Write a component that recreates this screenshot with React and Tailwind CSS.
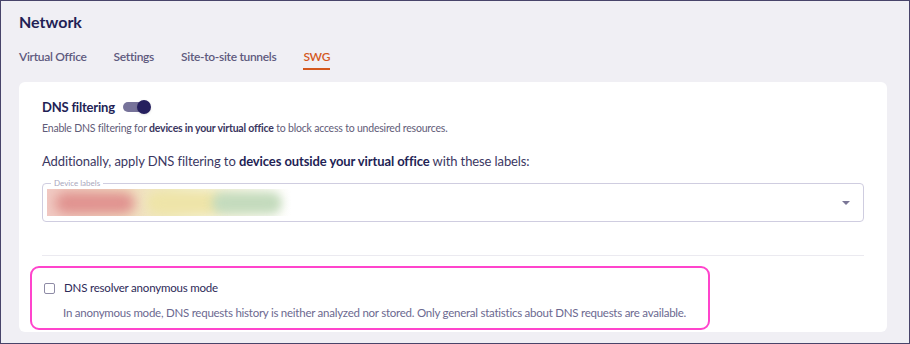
import React from "react";

export default function App() {
  return (
    <div className="w-[910px] h-[344px] border border-[#48446a] bg-[#f0eff4] overflow-hidden" style={{ fontFamily: "Lato, 'Noto Sans', sans-serif" }}>
      <div className="pl-[18px] pr-[22px]">
        <h1 className="pt-[10px] text-[16px] font-bold text-[#231f55] leading-[22px]">Network</h1>
        <div className="flex gap-[27px] mt-[16px] text-[12px] tracking-[-0.3px] font-semibold text-[#5e5a7e] leading-[16px]">
          <div className="pb-[5px]">Virtual Office</div>
          <div className="pb-[5px]">Settings</div>
          <div className="pb-[5px]">Site-to-site tunnels</div>
          <div className="pb-[3px] text-[#d4581e] border-b-[2px] border-[#d4581e]">SWG</div>
        </div>
        <div className="mt-[12px] bg-white rounded-[6px] h-[250px] pt-[15px] px-[23px]">
          <div className="flex items-center gap-[8px]">
            <span className="text-[13px] tracking-[-0.2px] font-bold text-[#231f55] leading-[20px]">DNS filtering</span>
            <div className="relative w-[28px] h-[16px] flex items-center">
              <div className="w-[24px] h-[10px] rounded-full bg-[#77739a]"></div>
              <div className="absolute right-0 top-[1px] w-[14px] h-[14px] rounded-full bg-[#251f5e] shadow"></div>
            </div>
          </div>
          <p className="mt-[4px] text-[10.5px] tracking-[-0.2px] text-[#5f5c78] leading-[15px]">
            Enable DNS filtering for <b className="font-bold text-[#3a3660]">devices in your virtual office</b> to block access to undesired resources.
          </p>
          <p className="mt-[15px] text-[13px] tracking-[-0.1px] text-[#3b3762] leading-[20px]">
            Additionally, apply DNS filtering to <b className="font-bold text-[#231f55]">devices outside your virtual office</b> with these labels:
          </p>
          <div className="relative mt-[12px] h-[39px] border border-[#cfcde0] rounded-[4px] flex items-center">
            <span className="absolute -top-[6px] left-[8px] bg-white px-[3px] text-[8px] leading-[10px] text-[#a9a7bd]">Device labels</span>
            <div className="relative ml-[4px] w-[244px] h-[27px] overflow-hidden bg-gradient-to-r from-[#f1c9c3] via-[#f0eac0] to-white">
              <div className="absolute left-[8px] top-[3px] w-[80px] h-[22px] rounded-full bg-[#e0928f] blur-[6px]"></div>
              <div className="absolute left-[100px] top-[3px] w-[75px] h-[22px] rounded-full bg-[#eee4a8] blur-[5px]"></div>
              <div className="absolute left-[165px] top-[3px] w-[70px] h-[22px] rounded-full bg-[#c4dbbd] blur-[5px]"></div>
            </div>
            <div className="ml-auto mr-[13px] w-0 h-0 border-l-[4px] border-r-[4px] border-t-[4px] border-l-transparent border-r-transparent border-t-[#7a7696]"></div>
          </div>
          <div className="mt-[33px] h-px bg-[#ebeaf0]"></div>
          <div className="-ml-[12px] mt-[10px] w-[680px] h-[64px] border-[2px] border-[#ff44cc] rounded-[9px] pl-[12px] pt-[12px]">
            <div className="flex items-center gap-[9px]">
              <div className="w-[11px] h-[11px] border border-[#8e8ba6] rounded-[2px]"></div>
              <span className="text-[11.5px] tracking-[-0.2px] text-[#2d2958] leading-[16px]">DNS resolver anonymous mode</span>
            </div>
            <p className="mt-[9px] ml-[19px] text-[11.5px] tracking-[-0.25px] text-[#6c6990] leading-[16px] whitespace-nowrap">
              In anonymous mode, DNS requests history is neither analyzed nor stored. Only general statistics about DNS requests are available.
            </p>
          </div>
        </div>
      </div>
    </div>
  );
}
